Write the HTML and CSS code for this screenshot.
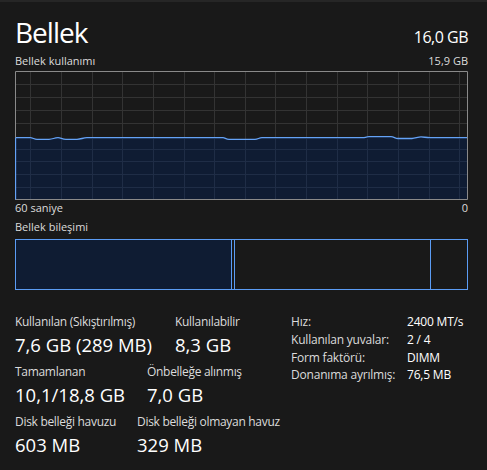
FILE: index.html
```html
<!DOCTYPE html>
<html lang="tr">
<head>
<meta charset="utf-8">
<title>Bellek</title>
<link rel="stylesheet" href="styles.css">
</head>
<body>
<div class="topstrip"></div>
<main class="panel">
  <header class="head">
    <h1 class="title">Bellek</h1>
    <span class="total">16,0 GB</span>
  </header>
  <div class="caption-row">
    <span>Bellek kullanımı</span>
    <span>15,9 GB</span>
  </div>
  <div class="graph">
    <svg width="453" height="129" viewBox="0 0 453 129">
      <g class="grid">
        <path d="M15.5 0V129M46.5 0V129M77.5 0V129M107.5 0V129M138.5 0V129M169.5 0V129M199.5 0V129M230.5 0V129M260.5 0V129M291.5 0V129M322.5 0V129M352.5 0V129M383.5 0V129M414.5 0V129M444.5 0V129"/>
        <path d="M0 13.5H453M0 26.5H453M0 39.5H453M0 52.5H453"/>
      </g>
      <path class="fill" d="M0 66.7 L15 66.7 C18 66.7 19 68.3 22 68.3 L34 68.3 C38 68.3 39 66.7 43 66.7 C46 66.7 47 68.3 51 68.3 L62 68.3 C66 68.3 68 66.7 72 66.7 L208 66.7 C210 66.7 211 68.3 214 68.3 L240 68.3 C243 68.3 244 66.7 247 66.7 L348 66.7 C350 66.7 351 65.7 354 65.7 L376 65.7 C379 65.7 380 67.5 383 67.5 L397 67.5 C400 67.5 403 65.9 406 65.9 C409 65.9 411 66.7 415 66.7 L453 66.7 L453 129 L0 129 Z"/>
      <g class="grid-low">
        <path d="M15.5 68V129M46.5 68V129M77.5 68V129M107.5 68V129M138.5 68V129M169.5 68V129M199.5 68V129M230.5 68V129M260.5 68V129M291.5 68V129M322.5 68V129M352.5 68V129M383.5 68V129M414.5 68V129M444.5 68V129"/>
        <path d="M0 78.5H453M0 90.5H453M0 103.5H453M0 116.5H453"/>
      </g>
      <path class="line" d="M0.5 129 L0.5 66.7 L15 66.7 C18 66.7 19 68.3 22 68.3 L34 68.3 C38 68.3 39 66.7 43 66.7 C46 66.7 47 68.3 51 68.3 L62 68.3 C66 68.3 68 66.7 72 66.7 L208 66.7 C210 66.7 211 68.3 214 68.3 L240 68.3 C243 68.3 244 66.7 247 66.7 L348 66.7 C350 66.7 351 65.7 354 65.7 L376 65.7 C379 65.7 380 67.5 383 67.5 L397 67.5 C400 67.5 403 65.9 406 65.9 C409 65.9 411 66.7 415 66.7 L453 66.7"/>
      <path class="frame" d="M0.5 66.7V0.5H452.5V128.5H0.5"/>
    </svg>
  </div>
  <div class="caption-row">
    <span>60 saniye</span>
    <span>0</span>
  </div>
  <div class="caption comp-title">Bellek bileşimi</div>
  <div class="composition">
    <div class="seg seg-used" style="width:217px"></div>
    <div class="seg" style="width:4px"></div>
    <div class="seg" style="width:197px"></div>
    <div class="seg" style="width:38px"></div>
  </div>
  <section class="stats">
    <div class="stat-left">
      <div class="stat-row">
        <div class="stat w1"><div class="label">Kullanılan (Sıkıştırılmış)</div><div class="value">7,6 GB (289 MB)</div></div>
        <div class="stat"><div class="label">Kullanılabilir</div><div class="value">8,3 GB</div></div>
      </div>
      <div class="stat-row">
        <div class="stat w2"><div class="label">Tamamlanan</div><div class="value">10,1/18,8 GB</div></div>
        <div class="stat"><div class="label">Önbelleğe alınmış</div><div class="value">7,0 GB</div></div>
      </div>
      <div class="stat-row">
        <div class="stat w3"><div class="label">Disk belleği havuzu</div><div class="value">603 MB</div></div>
        <div class="stat"><div class="label">Disk belleği olmayan havuz</div><div class="value">329 MB</div></div>
      </div>
    </div>
    <dl class="props">
      <dt>Hız:</dt><dd>2400 MT/s</dd>
      <dt>Kullanılan yuvalar:</dt><dd>2 / 4</dd>
      <dt>Form faktörü:</dt><dd>DIMM</dd>
      <dt>Donanıma ayrılmış:</dt><dd>76,5 MB</dd>
    </dl>
  </section>
</main>
</body>
</html>
```
FILE: styles.css
```css
html, body {
  margin: 0;
  padding: 0;
  background: #191919;
}
body {
  width: 487px;
  height: 470px;
  overflow: hidden;
  font-family: "Open Sans", "Noto Sans", sans-serif;
  color: #ffffff;
}
.topstrip {
  height: 2px;
  background: #262626;
}
.panel {
  padding: 13px 19px 0 15px;
}
.head {
  display: flex;
  justify-content: space-between;
  align-items: baseline;
  height: 34px;
}
.title {
  margin: 0;
  font-size: 28px;
  font-weight: 400;
  line-height: 34px;
  letter-spacing: -1px;
}
.total {
  font-size: 16px;
  line-height: 20px;
  letter-spacing: -0.5px;
}
.caption-row {
  display: flex;
  justify-content: space-between;
  font-size: 11px;
  line-height: 16px;
  color: #dcdcdc;
}
.head + .caption-row {
  margin-top: 4px;
}
.caption {
  font-size: 11px;
  line-height: 16px;
  color: #dcdcdc;
}
.graph {
  margin-top: 2px;
  height: 129px;
}
.graph svg {
  display: block;
}
.grid path {
  stroke: #333333;
  stroke-width: 1;
  fill: none;
}
.grid-low path {
  stroke: #1f2d46;
  stroke-width: 1;
  fill: none;
}
.fill {
  fill: #0f1c33;
}
.line {
  stroke: #64a2f6;
  stroke-width: 1.3;
  fill: none;
}
.frame {
  stroke: #8a8a8a;
  stroke-width: 1;
  fill: none;
}
.comp-title {
  margin-top: 3px;
}
.composition {
  margin-top: 4px;
  height: 51px;
  display: flex;
}
.seg {
  box-sizing: border-box;
  height: 51px;
  border: 1px solid #5b9cf4;
  flex: none;
}
.seg + .seg {
  margin-left: -1px;
}
.seg-used {
  background: #0f1c33;
}
.stats {
  margin-top: 24px;
  display: flex;
  align-items: flex-start;
}
.stat-left {
  width: 276px;
  display: flex;
  flex-direction: column;
  gap: 4px;
}
.stat-row {
  display: flex;
  gap: 21px;
}
.stat {
  flex: none;
}
.w1 { width: 139px; }
.w2 { width: 111px; }
.w3 { width: 101px; }
.label {
  font-size: 12px;
  line-height: 16px;
  color: #dcdcdc;
  white-space: nowrap;
  letter-spacing: -0.3px;
}
.value {
  font-size: 18.5px;
  line-height: 30px;
  white-space: nowrap;
}
.props {
  margin: -1px 0 0 0;
  display: grid;
  grid-template-columns: 116px auto;
  align-content: start;
  font-size: 12px;
  line-height: 17.8px;
  letter-spacing: -0.2px;
}
.props dt {
  color: #dcdcdc;
  white-space: nowrap;
}
.props dd {
  margin: 0;
  white-space: nowrap;
}
```
